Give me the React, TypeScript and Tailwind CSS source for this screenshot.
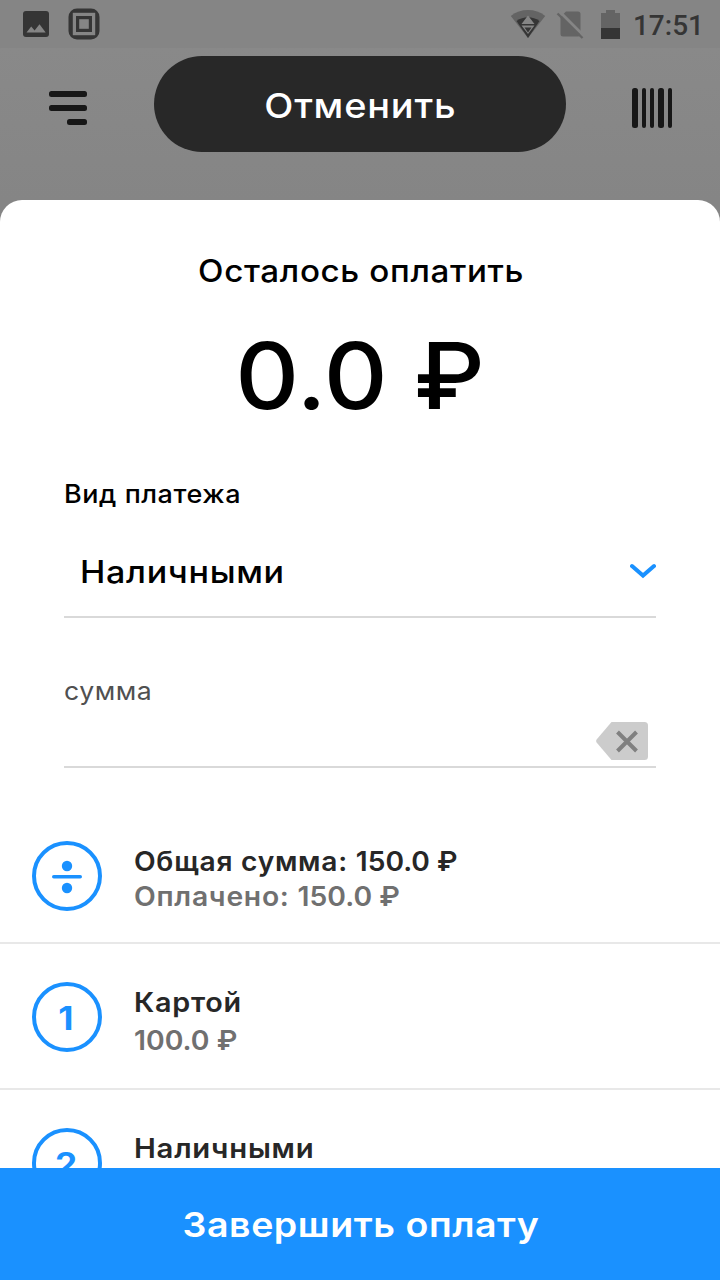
import type { ReactNode } from "react";

type PaymentRowProps = {
  badge: ReactNode;
  title: ReactNode;
  subtitle?: ReactNode;
};

const PaymentRow: React.FunctionComponent<PaymentRowProps> = ({
  badge,
  title,
  subtitle,
}) => {
  return (
    <div className="flex h-[146px] shrink-0 gap-8 border-b-2 border-[#e8e8e8] pl-8 pt-[38px] text-[27px] font-semibold">
      <div className="flex size-[70px] items-center justify-center rounded-full border-4 border-[#1a91ff] pt-[3px] pr-[2px] text-[32px] font-bold leading-none text-[#1a91ff]">
        <span className="inline-block scale-x-[1.1]">{badge}</span>
      </div>
      <div className="flex flex-col items-start pt-[2px] leading-[38px]">
        <p className="text-[#272727]">{title}</p>
        {subtitle && (
          <p className="origin-left scale-x-[1.05] text-[#707070]">
            {subtitle}
          </p>
        )}
      </div>
    </div>
  );
};

const StatusBar = () => (
  <div className="flex h-12 items-center justify-between bg-[#858585] pl-[22px] pr-4 text-[#353535]">
    <div className="flex items-center gap-[19px]">
      {/* ------- Picture ------- */}
      <svg width="27" height="26" viewBox="0 0 27 26">
        <rect x="1" width="26" height="26" rx="3" fill="currentColor" />
        <path d="M4.5 21.5 9.2 15.5l3.4 4 4.9-6.3 6.2 8.3z" fill="#858585" />
      </svg>
      {/* ------- Nested squares ------- */}
      <svg width="32" height="32" viewBox="0 0 32 32">
        <rect x=".5" y=".5" width="31" height="31" rx="8.5" fill="currentColor" />
        <rect x="4.8" y="4.8" width="22.4" height="22.4" fill="#858585" />
        <rect x="8" y="8" width="16" height="16" fill="currentColor" />
        <rect x="11.2" y="11.2" width="9.6" height="9.6" fill="#858585" />
      </svg>
    </div>
    <div className="flex items-center">
      {/* ------- Wifi ------- */}
      <svg width="36" height="30" viewBox="0 0 36 30">
        <path d="M.8 7C10.5-.9 25.500-.9 35.200 7L18 29z" fill="#646464" />
        <path d="M6.500 12C13.500 7 22.500 7 29.500 12L18 29z" fill="#353535" />
        <path d="M18 6.500 24.500 15h-13zM11.500 16.500h13L18 25z" fill="#858585" />
        <path d="M14.500 18.500h7L18 23.500z" fill="#353535" />
      </svg>
      {/* ------- No sim ------- */}
      <svg className="ml-[10px]" width="28" height="30" viewBox="0 0 28 30">
        <path d="M10 2.500h12a2.500 2.500 0 0 1 2.500 2.500v20a2.500 2.500 0 0 1-2.500 2.500H7A2.500 2.500 0 0 1 4.500 25V8z" fill="#646464" />
        <path d="M3.500 2.500 28.500 27.500" stroke="#858585" strokeWidth="3" />
        <path d="M1.500 4.500 26.500 29" stroke="#646464" strokeWidth="2.300" />
      </svg>
      {/* ------- Battery ------- */}
      <svg className="ml-[17px]" width="19" height="29" viewBox="0 0 19 29">
        <path d="M5 0h9v3h5v15.500H0V3h5z" fill="#646464" />
        <path d="M0 18h19v11H0z" fill="#353535" />
      </svg>
      <span className="ml-[13px] pt-[3px] font-['Roboto',sans-serif] text-[28px] font-medium leading-none">
        17:51
      </span>
    </div>
  </div>
);

const Header = () => (
  <div className="flex h-[152px] items-start justify-between bg-linear-to-b from-[#898989] to-[#858585] pl-[49px] pr-12 pt-2">
    <svg className="mt-[35px]" width="38" height="34" viewBox="0 0 38 34" fill="#171717">
      <rect width="38" height="6" rx="2.500" />
      <rect y="14" width="38" height="6" rx="2.500" />
      <rect x="18" y="28" width="20" height="6" rx="2.500" />
    </svg>
    <button className="ml-[22px] mr-[21px] flex h-24 w-[412px] items-center justify-center rounded-full bg-[#282828] pl-[1px] pt-[4px] text-[34.5px] font-[450] leading-none tracking-[.7px] text-white">
      <span className="scale-x-[1.1]">Отменить</span>
    </button>
    <svg className="mt-8" width="40" height="40" viewBox="0 0 40 40" fill="#171717">
      <rect width="6" height="40" rx="2.500" />
      <rect x="10" width="4" height="40" rx="2" />
      <rect x="18" width="4" height="40" rx="2" />
      <rect x="26" width="6" height="40" rx="2.500" />
      <rect x="36" width="4" height="40" rx="2" />
    </svg>
  </div>
);

export default function App() {
  return (
    <div className="flex h-[1280px] w-[720px] flex-col overflow-hidden bg-[#858585] font-['Inter',sans-serif]">
      <StatusBar />
      <Header />

      {/* ------- Payment sheet ------- */}
      <div className="flex min-h-0 flex-1 flex-col overflow-hidden rounded-t-[22px] bg-white pt-[51px] text-black">
        <h1 className="scale-x-[1.07] pl-[2px] text-center text-[31px] font-[450] leading-[40px] tracking-[.6px]">
          Осталось оплатить
        </h1>
        <p className="mt-[34px] scale-x-[1.07] text-center text-[92.5px] font-[450] leading-[100px]">
          0.0 ₽
        </p>

        <div className="flex flex-col px-16">
          <label className="mt-[54px] origin-left scale-x-[1.08] self-start text-[25px] font-medium leading-[30px] tracking-[.5px]">
            Вид платежа
          </label>
          <button className="mt-[19px] flex h-[90px] items-center justify-between border-b-2 border-[#d9d9d9] pl-4 text-[31px] font-[450] tracking-[.6px]">
            <span className="origin-left scale-x-[1.1]">Наличными</span>
            <svg width="26" height="16" viewBox="0 0 26 16" className="mb-[2px]">
              <path d="M2 3 13 12.500 24 3" fill="none" stroke="#1a91ff" strokeWidth="4" strokeLinecap="round" />
            </svg>
          </button>
          <label className="mt-[58px] origin-left scale-x-[1.065] self-start text-[25px] leading-[30px] tracking-[.5px] text-[#505050]">
            сумма
          </label>
          <div className="flex h-[62px] items-end justify-end border-b-2 border-[#d9d9d9] pb-[6px] pr-2">
            <svg width="52" height="38" viewBox="0 0 52 38">
              <path d="M15.500 0H48.500A3.500 3.500 0 0 1 52 3.500V34.500A3.500 3.500 0 0 1 48.500 38H15.500L.6 20.500Q-.4 19 .6 17.500z" fill="#ccc" />
              <path d="M21.500 10 40.500 29M40.500 10 21.500 29" stroke="#808080" strokeWidth="4" />
            </svg>
          </div>
        </div>

        {/* ------- Totals ------- */}
        <div className="mt-10 flex h-[136px] shrink-0 gap-8 border-b-2 border-[#e8e8e8] pl-8 pt-[33px] text-[27px] font-semibold">
          <svg width="70" height="70" viewBox="0 0 70 70" fill="#1a91ff">
            <circle cx="35" cy="35" r="33" fill="none" stroke="#1a91ff" strokeWidth="4" />
            <circle cx="35" cy="25" r="5.200" />
            <rect x="20" y="34" width="30" height="3.500" rx="1.750" />
            <circle cx="35" cy="47" r="5.200" />
          </svg>
          <div className="flex flex-col items-start pt-[3px] leading-[35px] tracking-[.7px]">
            <p className="origin-left scale-x-[1.043] text-[#272727]">
              Общая сумма: <span className="tracking-normal">150.0 ₽</span>
            </p>
            <p className="origin-left scale-x-[1.048] text-[#707070]">
              Оплачено: <span className="tracking-normal">150.0 ₽</span>
            </p>
          </div>
        </div>

        <PaymentRow
          badge="1"
          title={
            <span className="inline-block origin-left scale-x-[1.065] tracking-[.7px]">
              Картой
            </span>
          }
          subtitle="100.0 ₽"
        />
        <PaymentRow
          badge="2"
          title={
            <span className="inline-block origin-left scale-x-[1.085] tracking-[.7px]">
              Наличными
            </span>
          }
        />
      </div>

      <button className="flex h-28 shrink-0 items-center justify-center bg-[#1a91ff] pl-[2px] pt-[3px] text-[34.5px] font-semibold leading-none tracking-[.5px] text-white">
        <span className="scale-x-[1.088]">Завершить оплату</span>
      </button>
    </div>
  );
}
